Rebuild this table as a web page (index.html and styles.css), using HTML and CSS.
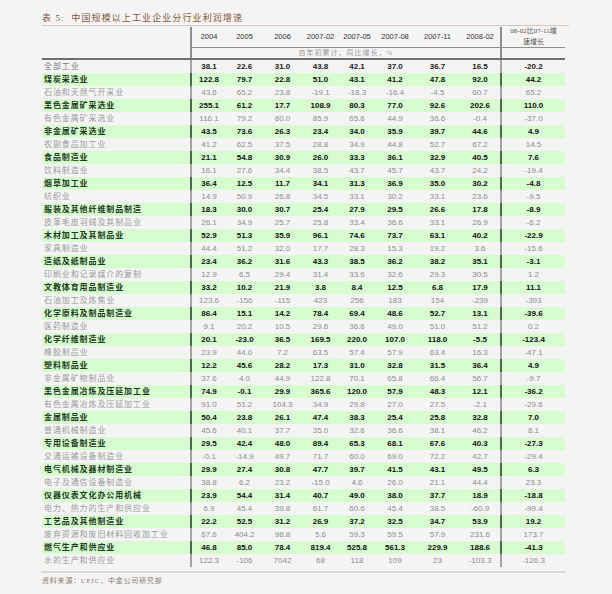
FILE: index.html
```html
<!DOCTYPE html>
<html lang="zh-CN">
<head>
<meta charset="utf-8">
<title>表 5</title>
<link rel="stylesheet" href="styles.css">
</head>
<body>
<div class="page">
  <div class="title">表 5:&nbsp; 中国规模以上工业企业分行业利润增速</div>
  <div class="table">
    <div class="row head">
      <span></span><span>2004</span><span>2005</span><span>2006</span><span>2007-02</span><span>2007-05</span><span>2007-08</span><span>2007-11</span><span>2008-02</span><span class="last">08-02比07-11增<br>速增长</span>
    </div>
    <div class="row sub">
      <span></span><span class="span8">自年初累计，同比增长，%</span><span class="last"></span>
    </div>
    <div class="row total"><span>全部工业</span><span>38.1</span><span>22.6</span><span>31.0</span><span>43.8</span><span>42.1</span><span>37.0</span><span>36.7</span><span>16.5</span><span>-20.2</span></div>
    <div class="row g"><span>煤炭采选业</span><span>122.8</span><span>79.7</span><span>22.8</span><span>51.0</span><span>43.1</span><span>41.2</span><span>47.8</span><span>92.0</span><span>44.2</span></div>
    <div class="row"><span>石油和天然气开采业</span><span>43.6</span><span>65.2</span><span>23.8</span><span>-19.1</span><span>-18.3</span><span>-16.4</span><span>-4.5</span><span>60.7</span><span>65.2</span></div>
    <div class="row g"><span>黑色金属矿采选业</span><span>255.1</span><span>61.2</span><span>17.7</span><span>108.9</span><span>80.3</span><span>77.0</span><span>92.6</span><span>202.6</span><span>110.0</span></div>
    <div class="row"><span>有色金属矿采选业</span><span>116.1</span><span>79.2</span><span>80.0</span><span>85.9</span><span>65.6</span><span>44.9</span><span>36.6</span><span>-0.4</span><span>-37.0</span></div>
    <div class="row g"><span>非金属矿采选业</span><span>43.5</span><span>73.6</span><span>26.3</span><span>23.4</span><span>34.0</span><span>35.9</span><span>39.7</span><span>44.6</span><span>4.9</span></div>
    <div class="row"><span>农副食品加工业</span><span>41.2</span><span>62.5</span><span>37.5</span><span>28.8</span><span>34.9</span><span>44.8</span><span>52.7</span><span>67.2</span><span>14.5</span></div>
    <div class="row g"><span>食品制造业</span><span>21.1</span><span>54.8</span><span>30.9</span><span>26.0</span><span>33.3</span><span>36.1</span><span>32.9</span><span>40.5</span><span>7.6</span></div>
    <div class="row"><span>饮料制造业</span><span>16.1</span><span>27.6</span><span>34.4</span><span>38.5</span><span>43.7</span><span>45.7</span><span>43.7</span><span>24.2</span><span>-19.4</span></div>
    <div class="row g"><span>烟草加工业</span><span>36.4</span><span>12.5</span><span>11.7</span><span>34.1</span><span>31.3</span><span>36.9</span><span>35.0</span><span>30.2</span><span>-4.8</span></div>
    <div class="row"><span>纺织业</span><span>14.9</span><span>50.9</span><span>26.8</span><span>34.5</span><span>33.1</span><span>30.2</span><span>33.1</span><span>23.6</span><span>-9.5</span></div>
    <div class="row g"><span>服装及其他纤维制品制造</span><span>18.3</span><span>30.0</span><span>30.7</span><span>25.4</span><span>27.9</span><span>29.5</span><span>26.6</span><span>17.8</span><span>-8.9</span></div>
    <div class="row"><span>皮革毛皮羽绒及其制品业</span><span>26.1</span><span>34.9</span><span>25.7</span><span>25.8</span><span>33.4</span><span>36.6</span><span>33.1</span><span>26.9</span><span>-6.2</span></div>
    <div class="row g"><span>木材加工及其制品业</span><span>52.9</span><span>51.3</span><span>35.9</span><span>96.1</span><span>74.6</span><span>73.7</span><span>63.1</span><span>40.2</span><span>-22.9</span></div>
    <div class="row"><span>家具制造业</span><span>44.4</span><span>51.2</span><span>32.0</span><span>17.7</span><span>28.3</span><span>15.3</span><span>19.2</span><span>3.6</span><span>-15.6</span></div>
    <div class="row g"><span>造纸及纸制品业</span><span>23.4</span><span>36.2</span><span>31.6</span><span>43.3</span><span>38.5</span><span>36.2</span><span>38.2</span><span>35.1</span><span>-3.1</span></div>
    <div class="row"><span>印刷业和记录媒介的复制</span><span>12.9</span><span>6.5</span><span>29.4</span><span>31.4</span><span>33.6</span><span>32.6</span><span>29.3</span><span>30.5</span><span>1.2</span></div>
    <div class="row g"><span>文教体育用品制造业</span><span>33.2</span><span>10.2</span><span>21.9</span><span>3.8</span><span>8.4</span><span>12.5</span><span>6.8</span><span>17.9</span><span>11.1</span></div>
    <div class="row"><span>石油加工及炼焦业</span><span>123.6</span><span>-156</span><span>-115</span><span>423</span><span>256</span><span>183</span><span>154</span><span>-239</span><span>-393</span></div>
    <div class="row g"><span>化学原料及制品制造业</span><span>86.4</span><span>15.1</span><span>14.2</span><span>78.4</span><span>69.4</span><span>48.6</span><span>52.7</span><span>13.1</span><span>-39.6</span></div>
    <div class="row"><span>医药制造业</span><span>9.1</span><span>20.2</span><span>10.5</span><span>29.6</span><span>36.6</span><span>49.0</span><span>51.0</span><span>51.2</span><span>0.2</span></div>
    <div class="row g"><span>化学纤维制造业</span><span>20.1</span><span>-23.0</span><span>36.5</span><span>169.5</span><span>220.0</span><span>107.0</span><span>118.0</span><span>-5.5</span><span>-123.4</span></div>
    <div class="row"><span>橡胶制品业</span><span>23.9</span><span>44.0</span><span>7.2</span><span>63.5</span><span>57.4</span><span>57.9</span><span>63.4</span><span>16.3</span><span>-47.1</span></div>
    <div class="row g"><span>塑料制品业</span><span>12.2</span><span>45.6</span><span>28.2</span><span>17.3</span><span>31.0</span><span>32.8</span><span>31.5</span><span>36.4</span><span>4.9</span></div>
    <div class="row"><span>非金属矿物制品业</span><span>37.6</span><span>4.0</span><span>44.9</span><span>122.8</span><span>70.1</span><span>65.8</span><span>66.4</span><span>56.7</span><span>-9.7</span></div>
    <div class="row g"><span>黑色金属冶炼及压延加工业</span><span>74.9</span><span>-0.1</span><span>29.9</span><span>365.6</span><span>120.0</span><span>57.9</span><span>48.3</span><span>12.1</span><span>-36.2</span></div>
    <div class="row"><span>有色金属冶炼及压延加工业</span><span>91.0</span><span>51.2</span><span>104.3</span><span>34.9</span><span>29.8</span><span>27.0</span><span>27.5</span><span>-2.1</span><span>-29.6</span></div>
    <div class="row g"><span>金属制品业</span><span>50.4</span><span>23.8</span><span>26.1</span><span>47.4</span><span>38.3</span><span>25.4</span><span>25.8</span><span>32.8</span><span>7.0</span></div>
    <div class="row"><span>普通机械制造业</span><span>45.6</span><span>40.1</span><span>37.7</span><span>35.0</span><span>32.6</span><span>36.6</span><span>38.1</span><span>46.2</span><span>8.1</span></div>
    <div class="row g"><span>专用设备制造业</span><span>29.5</span><span>42.4</span><span>48.0</span><span>89.4</span><span>65.3</span><span>68.1</span><span>67.6</span><span>40.3</span><span>-27.3</span></div>
    <div class="row"><span>交通运输设备制造业</span><span>-0.1</span><span>-14.9</span><span>49.7</span><span>71.7</span><span>60.0</span><span>69.0</span><span>72.2</span><span>42.7</span><span>-29.4</span></div>
    <div class="row g"><span>电气机械及器材制造业</span><span>29.9</span><span>27.4</span><span>30.8</span><span>47.7</span><span>39.7</span><span>41.5</span><span>43.1</span><span>49.5</span><span>6.3</span></div>
    <div class="row"><span>电子及通信设备制造业</span><span>38.8</span><span>6.2</span><span>23.2</span><span>-15.0</span><span>4.6</span><span>26.0</span><span>21.1</span><span>44.4</span><span>23.3</span></div>
    <div class="row g"><span>仪器仪表文化办公用机械</span><span>23.9</span><span>54.4</span><span>31.4</span><span>40.7</span><span>49.0</span><span>38.0</span><span>37.7</span><span>18.9</span><span>-18.8</span></div>
    <div class="row"><span>电力、热力的生产和供应业</span><span>6.9</span><span>45.4</span><span>39.8</span><span>61.7</span><span>60.6</span><span>45.4</span><span>38.5</span><span>-60.9</span><span>-99.4</span></div>
    <div class="row g"><span>工艺品及其他制造业</span><span>22.2</span><span>52.5</span><span>31.2</span><span>26.9</span><span>37.2</span><span>32.5</span><span>34.7</span><span>53.9</span><span>19.2</span></div>
    <div class="row"><span>废弃资源和废旧材料回收加工业</span><span>67.6</span><span>404.2</span><span>98.8</span><span>5.6</span><span>59.3</span><span>59.5</span><span>57.9</span><span>231.6</span><span>173.7</span></div>
    <div class="row g"><span>燃气生产和供应业</span><span>46.8</span><span>85.0</span><span>78.4</span><span>819.4</span><span>525.8</span><span>561.3</span><span>229.9</span><span>188.6</span><span>-41.3</span></div>
    <div class="row"><span>水的生产和供应业</span><span>122.3</span><span>-106</span><span>7042</span><span>68</span><span>118</span><span>109</span><span>23</span><span>-103.3</span><span>-126.3</span></div>
  </div>
  <div class="source">资料来源：CEIC，中金公司研究部</div>
</div>
</body>
</html>
```

FILE: styles.css
```css
html, body {
  margin: 0;
  padding: 0;
  background: #f4f4f4;
}

.page {
  width: 523px;
  margin-left: 42px;
  font-family: "Liberation Sans", Arial, "Noto Sans CJK SC", sans-serif;
}

.title {
  box-sizing: border-box;
  height: 26px;
  padding-top: 12px;
  line-height: 12px;
  font-size: 9px;
  letter-spacing: 1.1px;
  color: #8a5638;
  font-family: "Liberation Serif", "Noto Sans CJK SC", serif;
  border-bottom: 1px solid #d6c6bc;
  width: 527px;
}

.table {
  display: flex;
  flex-direction: column;
}

.row {
  display: flex;
  height: 13px;
  line-height: 13px;
  font-size: 8px;
  color: #8c8c8c;
}

.row > span {
  flex: none;
  box-sizing: border-box;
  text-align: center;
  white-space: nowrap;
  overflow: hidden;
}

.row > :nth-child(1) {
  width: 148px;
  text-align: left;
  padding-left: 2px;
  font-family: "Liberation Serif", "Noto Sans CJK SC", serif;
  font-size: 8px;
  letter-spacing: 0.9px;
  color: #9a9a9a;
}
.row > :nth-child(2) { width: 36px; border-left: 2px solid #a4a4a4; }
.row > :nth-child(3) { width: 37px; }
.row > :nth-child(4) { width: 39px; }
.row > :nth-child(5) { width: 37px; }
.row > :nth-child(6) { width: 36px; }
.row > :nth-child(7) { width: 40px; }
.row > :nth-child(8) { width: 45px; }
.row > :nth-child(9) { width: 40px; }
.row > :nth-child(10) { width: 65px; border-left: 2px solid #a4a4a4; }

.row.g {
  background: #d6fcd0;
  color: #111;
  font-weight: bold;
}
.row.g > :nth-child(1) {
  color: #1d3a1d;
  font-weight: bold;
}
.row.g > :nth-child(2),
.row.g > :nth-child(10) {
  border-left-color: #506650;
}

.row.total {
  color: #1a1a1a;
  font-weight: bold;
}
.row.total > :nth-child(1) {
  color: #7a7a7a;
  font-weight: normal;
}

/* header rows */
.row.head {
  height: 22px;
  line-height: 21px;
  font-size: 7.5px;
  color: #333;
}
.row.head > span {
  border-bottom: 1px solid #8e8e8e;
  height: 22px;
}
.row.head > :nth-child(1) {
  border-bottom: none;
}
.row.head > :nth-child(2) {
  border-left-color: #8e8e8e;
  margin-top: 1px;
  height: 21px;
  line-height: 20px;
}
.row.head > .last {
  width: 65px;
  border-left-color: #8e8e8e;
  margin-top: 1px;
  height: 21px;
  line-height: 11px;
  font-family: "Liberation Serif", "Noto Sans CJK SC", serif;
  font-size: 7px;
  color: #555;
  display: flex;
  flex-direction: column;
  justify-content: center;
}

.row.sub {
  height: 12px;
  line-height: 10px;
  border-bottom: 2px solid #6e6e6e;
  box-sizing: border-box;
}
.row.sub > span {
  height: 10px;
}
.row.sub > .span8 {
  width: 310px;
  border-left: 2px solid #8e8e8e;
  font-family: "Liberation Serif", "Noto Sans CJK SC", serif;
  font-size: 7px;
  letter-spacing: 1px;
  color: #9a9a9a;
  font-weight: normal;
}
.row.sub > .last {
  width: 65px;
  border-left: 2px solid #8e8e8e;
}

.source {
  margin-top: 4px;
  border-top: 2px solid #d8d8d8;
  width: 524px;
  margin-left: -1px;
  padding-left: 1px;
  padding-top: 2px;
  line-height: 12px;
  font-size: 7px;
  letter-spacing: 0.8px;
  color: #8a7a72;
  font-family: "Liberation Serif", "Noto Sans CJK SC", serif;
}
```
